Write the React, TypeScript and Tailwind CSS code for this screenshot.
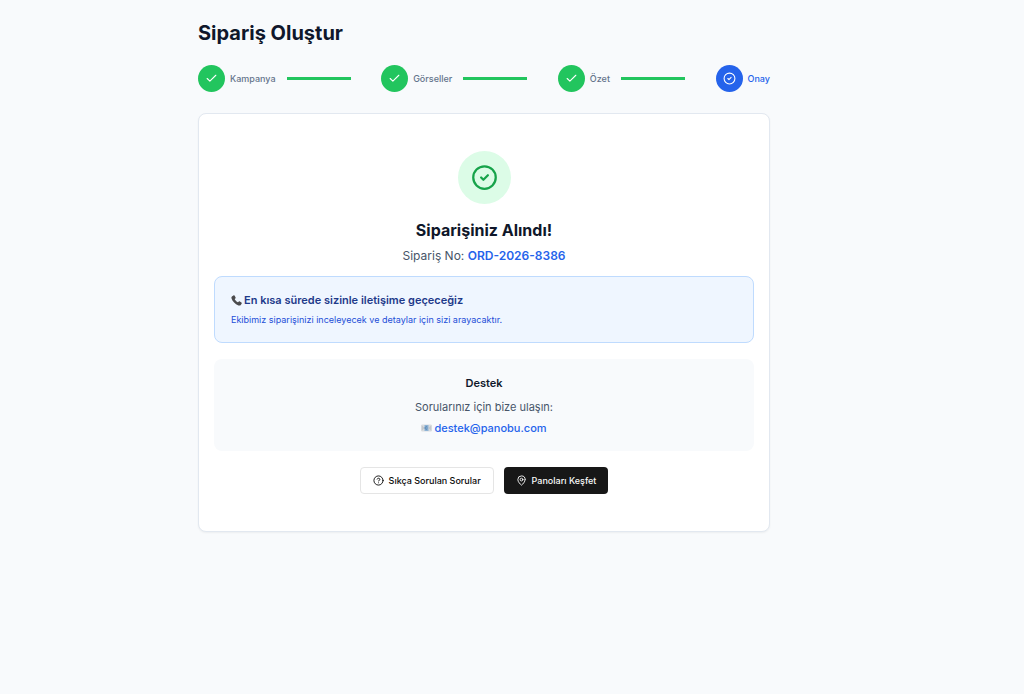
import { Check, CircleCheck, CircleHelp, MapPin } from "lucide-react";

const steps = [
  { label: "Kampanya", done: true },
  { label: "Görseller", done: true },
  { label: "Özet", done: true },
  { label: "Onay", done: false },
];

function PhoneIcon() {
  return (
    <svg viewBox="0 0 24 24" className="h-[11px] w-[11px] shrink-0" aria-hidden="true">
      <path
        d="M2 3.5 5.2 1c1-.7 2-.4 2.7.6l2 3.300c.6 1 .4 1.900-.4 2.600L8 8.800c1.200 2.900 3.800 5.600 7.200 7.200l1.500-1.500c.8-.8 1.700-.9 2.600-.3l3.400 2.200c1 .7 1.200 1.700.5 2.700l-2.400 3c-1 1.200-2.700 1.300-4.600.6C8.800 19.800 3.500 14 1.200 7.500.7 5.900.8 4.500 2 3.500Z"
        fill="#4b4b4d"
      />
    </svg>
  );
}

function MailIcon() {
  return (
    <svg viewBox="0 0 22 16" className="h-2 w-[11px] shrink-0" aria-hidden="true">
      <rect x="1" y="1" width="20" height="14" rx="1" fill="#d9dcdf" />
      <path d="M1 2l6 6-6 6zM21 2l-6 6 6 6z" fill="#c3c7cb" />
      <rect x="7" y="2" width="8" height="12" fill="#8fb4d6" />
      <path d="M12.500 5.500a3 3 0 1 0 0 5M9 8h4" fill="none" stroke="#4d7fae" strokeWidth="1.500" />
    </svg>
  );
}

export default function App() {
  return (
    <div className="min-h-screen bg-[#f8fafc] pr-14 font-['Inter',sans-serif] antialiased">
      <main className="mx-auto w-full max-w-[572px] pt-[19px] pb-8">
        <h1 className="text-xl leading-7 font-bold text-slate-900">Sipariş Oluştur</h1>

        <ol className="mt-[18px] flex items-center justify-between">
          {steps.map((step) => (
            <li key={step.label} className="flex items-center" aria-current={step.done ? undefined : "step"}>
              <span
                className={
                  step.done
                    ? "flex size-[27px] items-center justify-center rounded-full bg-[#22c55e] text-white"
                    : "flex size-[27px] items-center justify-center rounded-full bg-[#2563eb] text-white"
                }
              >
                {step.done ? <Check size={13} /> : <CircleCheck size={13} />}
              </span>
              <span
                className={
                  step.done
                    ? "ml-[5px] text-[9px] leading-[13px] font-medium text-[#64748b]"
                    : "ml-[5px] text-[9px] leading-[13px] font-medium text-[#2563eb]"
                }
              >
                {step.label}
              </span>
              {step.done && <span className="ml-[11px] h-[3px] w-16 bg-[#22c55e]" />}
            </li>
          ))}
        </ol>

        <section className="mt-[21px] flex flex-col items-center rounded-lg border border-[#e2e8f0] bg-white px-[15px] py-[37px] shadow-xs">
          <div className="flex size-[53px] items-center justify-center rounded-full bg-[#dcfce7] text-[#16a34a]">
            <CircleCheck size={27} />
          </div>
          <h2 className="mt-4 text-base leading-5 font-bold text-[#0f172a]">Siparişiniz Alındı!</h2>
          <p className="mt-[7px] text-xs leading-[18px] text-[#475569]">
            Sipariş No: <span className="font-semibold text-[#2563eb]">ORD-2026-8386</span>
          </p>

          <div className="mt-[11px] w-full rounded-lg border border-[#bfdbfe] bg-[#eff6ff] px-4 py-[15px]">
            <h3 className="flex items-center gap-[2px] text-[11px] leading-4 font-semibold text-[#1e3a8a]">
              <PhoneIcon />
              En kısa sürede sizinle iletişime geçeceğiz
            </h3>
            <p className="mt-[5px] text-[9px] leading-[14px] text-[#1d4ed8]">
              Ekibimiz siparişinizi inceleyecek ve detaylar için sizi arayacaktır.
            </p>
          </div>

          <div className="mt-4 flex w-full flex-col items-center rounded-lg bg-[#f8fafc] pt-4 pb-[15px] text-[11px] leading-4">
            <h3 className="font-semibold text-[#0f172a]">Destek</h3>
            <p className="mt-2 text-[#475569]">Sorularınız için bize ulaşın:</p>
            <a
              href="mailto:destek@panobu.com"
              className="mt-[5px] flex items-center gap-[2px] font-medium text-[#2563eb]"
            >
              <MailIcon />
              destek@panobu.com
            </a>
          </div>

          <div className="mt-4 flex gap-[10px]">
            <button
              type="button"
              className="flex h-[27px] items-center gap-[5px] rounded border border-[#e5e5e5] bg-white px-[12px] text-[9px] font-medium text-[#0a0a0a]"
            >
              <CircleHelp size={11} />
              Sıkça Sorulan Sorular
            </button>
            <button
              type="button"
              className="flex h-[27px] items-center gap-[5px] rounded bg-[#171717] px-[12px] text-[9px] font-medium text-[#fafafa]"
            >
              <MapPin size={11} />
              Panoları Keşfet
            </button>
          </div>
        </section>
      </main>
    </div>
  );
}
